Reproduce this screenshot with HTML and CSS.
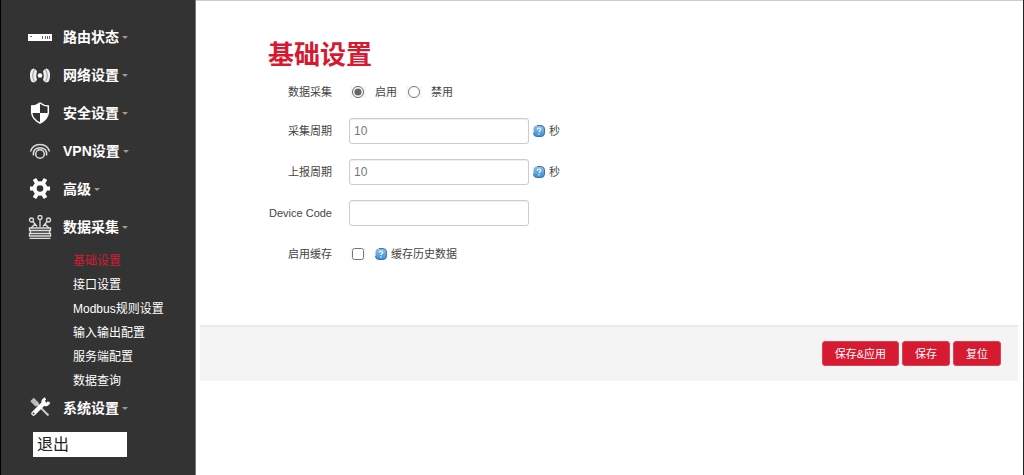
FILE: index.html
```
<!DOCTYPE html>
<html lang="zh-CN">
  <head>
    <meta charset="utf-8">
    <title>基础设置</title>
    <link rel="stylesheet" href="styles.css">
  </head>
  <body>
    <svg width="0" height="0" class="defs" aria-hidden="true">
      <defs>
        <linearGradient id="helpBlue" x1="0" y1="0" x2="0" y2="1">
          <stop offset="0" stop-color="#8fc0e8"/>
          <stop offset="1" stop-color="#3a8fd6"/>
        </linearGradient>
        <symbol id="help" viewBox="0 0 12 12">
          <path d="M4 .5h4Q11.500 .5 11.500 4v4Q11.500 11.500 8 11.500H4Q.5 11.500 .5 8V4Q.5 .5 4 .5z" fill="url(#helpBlue)"/>
          <path d="M4 .5h4Q11.500 .5 11.500 4v4Q11.500 11.500 8 11.500H4Q.5 11.500 .5 8" fill="none" stroke="#3f76a8"/>
          <path d="M4.300 4.700c0-2.200 3.400-2.200 3.400-.2 0 1.200-1.700 1.200-1.700 2.600M6 8.300v1.200" fill="none" stroke="#fff" stroke-width="1.200"/>
        </symbol>
      </defs>
    </svg>

    <nav class="sidebar">
      <ul class="menu">
        <li>
          <a href="#"><svg class="icon" viewBox="0 0 24 24"><path fill="#fff" d="M0 9h24v7H0z"/><path fill="#666" d="M2 11h2v1H2zM14 11h1v3h-1zM17 11h1v3h-1zM19 11h1v3h-1zM21 11h1v3h-1z"/></svg>路由状态<span class="caret"></span></a>
        </li>
        <li>
          <a href="#"><svg class="icon" viewBox="0 0 24 24"><circle cx="12" cy="12.500" r="2.300" fill="#fff"/><path fill="#eee" d="M5.500 5.500Q2 6 2 12.500t3.500 7q1.500 0 3.500-2.500-1.500-4.500 0-9-2-2.500-3.500-2.500zM18.500 5.500q3.500.5 3.500 7t-3.500 7Q17 19.500 15 17q1.500-4.500 0-9 2-2.500 3.500-2.500z"/><path fill="none" stroke="#777" stroke-width=".8" d="M6.500 6.500q-3.500 6 0 12M17.500 6.500q3.500 6 0 12"/></svg>网络设置<span class="caret"></span></a>
        </li>
        <li>
          <a href="#"><svg class="icon" viewBox="0 0 24 24"><path fill="#333" stroke="#fff" stroke-width="1.500" d="M12 2q4 3 8.300 3v7q-.8 6.500-8.300 10Q4.500 18.500 3.700 12V5Q8 5 12 2z"/><path fill="#fff" d="M12 2v10H4V5q4 0 8-3zM12 12h8q-1 6.500-8 10z"/></svg>安全设置<span class="caret"></span></a>
        </li>
        <li>
          <a href="#"><svg class="icon" viewBox="0 0 24 24" fill="none" stroke="#ddd" stroke-width="1.500"><circle cx="12" cy="15" r="4.300"/><path d="M5.500 16.500C3.500 6 20.500 6 18.500 16.500M2.500 12.500C5 3 19 3 21.500 12.500"/></svg>VPN设置<span class="caret"></span></a>
        </li>
        <li>
          <a href="#"><svg class="icon" viewBox="0 0 24 24"><circle cx="12" cy="11.500" r="5.300" fill="none" stroke="#fff" stroke-width="4"/><path stroke="#fff" stroke-width="4" d="M2 11.500h4M18 11.500h4M6.500 2l2.500 4.300M15 16.700l2.500 4.300M17.500 2L15 6.300M9 16.700L6.500 21"/></svg>高级<span class="caret"></span></a>
        </li>
        <li class="open">
          <a href="#"><svg class="icon" viewBox="0 0 24 24" fill="none" stroke="#ddd" stroke-width="1.300"><circle cx="12" cy="2.500" r="2"/><circle cx="3.500" cy="5" r="2"/><circle cx="20.500" cy="5" r="2"/><path d="M12 4.500V12M5 6.500l4 5M19 6.500l-4 5M3.500 12.500l4-4M20.500 12.500l-4-4M1.500 13h21v2.500h-21zM2.500 15.500v3h19v-3M1.500 18.500h21V21h-21zM1.500 23.300h21"/></svg>数据采集<span class="caret"></span></a>
          <ul class="submenu">
            <li><a href="#" class="active">基础设置</a></li>
            <li><a href="#">接口设置</a></li>
            <li><a href="#">Modbus规则设置</a></li>
            <li><a href="#">输入输出配置</a></li>
            <li><a href="#">服务端配置</a></li>
            <li><a href="#">数据查询</a></li>
          </ul>
        </li>
        <li>
          <a href="#"><svg class="icon" viewBox="0 0 24 24" fill="none"><path stroke="#bbb" stroke-width="5" d="M4 3.500l5.500 5.500"/><path stroke="#ccc" stroke-width="2" d="M8 7l12.500 12.500"/><path stroke="#fff" stroke-width="4.500" stroke-linecap="round" d="M5.500 17.500L16 7"/><path stroke="#fff" stroke-width="3" d="M17.500 2.500q-4 2-2 5.500 3.500 2 5.500-2"/><circle cx="5.500" cy="17.500" r="1" fill="#333"/></svg>系统设置<span class="caret"></span></a>
        </li>
      </ul>
      <a href="#" class="logout">退出</a>
    </nav>

    <main class="content">
      <form>
        <div class="fields">
          <h1>基础设置</h1>
          <div class="row choices" role="radiogroup" aria-labelledby="collectLabel">
            <span class="label" id="collectLabel">数据采集</span>
            <span class="tick"><input type="radio" name="collect" id="on" checked></span>
            <label for="on">启用</label>
            <span class="tick"><input type="radio" name="collect" id="off"></span>
            <label for="off">禁用</label>
          </div>
          <div class="row">
            <label class="label" for="collectPeriod">采集周期</label>
            <input type="text" id="collectPeriod" value="10">
            <span class="hint"><svg class="help"><use href="#help"/></svg>秒</span>
          </div>
          <div class="row">
            <label class="label" for="reportPeriod">上报周期</label>
            <input type="text" id="reportPeriod" value="10">
            <span class="hint"><svg class="help"><use href="#help"/></svg>秒</span>
          </div>
          <div class="row">
            <label class="label" for="deviceCode">Device Code</label>
            <input type="text" id="deviceCode">
          </div>
          <div class="row choices">
            <label class="label" for="cache">启用缓存</label>
            <span class="tick"><input type="checkbox" id="cache"></span>
            <span class="hint"><svg class="help"><use href="#help"/></svg>缓存历史数据</span>
          </div>
        </div>
        <div class="actions">
          <button type="submit">保存&amp;应用</button>
          <button type="button">保存</button>
          <button type="reset">复位</button>
        </div>
      </form>
    </main>
  </body>
</html>
```

FILE: styles.css
```
* { box-sizing: border-box; }

body {
  margin: 0;
  min-height: 100vh;
  display: flex;
  border-left: 1px solid #000;
  border-right: 1px solid #222;
  background: #fff;
  color: #444;
  font: 11px/16px "Liberation Sans", "Noto Sans CJK SC", sans-serif;
}

ul { margin: 0; padding: 0; list-style: none; }
a { color: #fff; text-decoration: none; }
.defs { position: absolute; }

/* sidebar */
.sidebar {
  flex: 0 0 195px;
  padding: 22px 0 16px;
  background: #333;
  border-right: 1px solid #777;
}
.menu > li { margin-bottom: 8px; }
.menu > li.open { margin-bottom: 0; }
.menu > li > a {
  display: flex;
  align-items: center;
  height: 30px;
  padding-left: 27px;
  font-size: 14px;
  font-weight: bold;
}
.icon { width: 24px; height: 24px; margin-right: 11px; }
.caret {
  margin-left: 3px;
  border: 3px solid transparent;
  border-top-color: #999;
  border-bottom: 0;
}
.submenu { padding: 7px 0 0 72px; }
.submenu a { display: block; font-size: 12px; line-height: 24px; }
.submenu a.active { color: #d51a32; }
.logout {
  display: block;
  width: 94px;
  margin: 9px 0 0 32px;
  padding-left: 4px;
  background: #fff;
  color: #222;
  font-size: 16px;
  line-height: 25px;
}

/* settings form */
.content {
  flex: 1;
  padding: 0 5px 0 4px;
  border-top: 1px solid #ccc;
}
.fields { padding: 36px 0 45px 45px; }
h1 {
  margin: 0 0 6px;
  padding-left: 23px;
  color: #d51a32;
  font-size: 26px;
  line-height: 36px;
}
.row {
  display: flex;
  align-items: center;
  height: 25px;
  margin-bottom: 16px;
}
.row.choices { margin-bottom: 14px; }
.label { width: 87px; margin-right: 17px; text-align: right; }
input[type="text"] {
  width: 180px;
  height: 26px;
  padding: 0 4px;
  border: 1px solid #ccc;
  border-radius: 3px;
  box-shadow: inset 0 1px 1px #eee;
  color: #777;
  font: inherit;
  font-size: 12px;
}
.hint { display: flex; align-items: center; margin-left: 4px; }
.help { width: 12px; height: 12px; margin-right: 4px; }
.tick {
  display: flex;
  align-items: center;
  justify-content: center;
  width: 16px;
  height: 12px;
  margin-left: 1px;
  background: #f6f6f6;
}
.tick input { width: 12px; height: 12px; margin: 0; accent-color: #666; }
.tick + label { margin: 0 8px 0 9px; }
.tick + .hint { margin-left: 9px; }

.actions {
  display: flex;
  justify-content: flex-end;
  gap: 3px;
  padding: 14px 17px 15px;
  background: #f4f4f4;
  border-top: 2px solid #eaeaea;
}
button {
  height: 25px;
  padding: 0 12px;
  border: 1px solid #dd4055;
  border-radius: 3px;
  background: #d51a32;
  color: #fff;
  font: inherit;
}
```
